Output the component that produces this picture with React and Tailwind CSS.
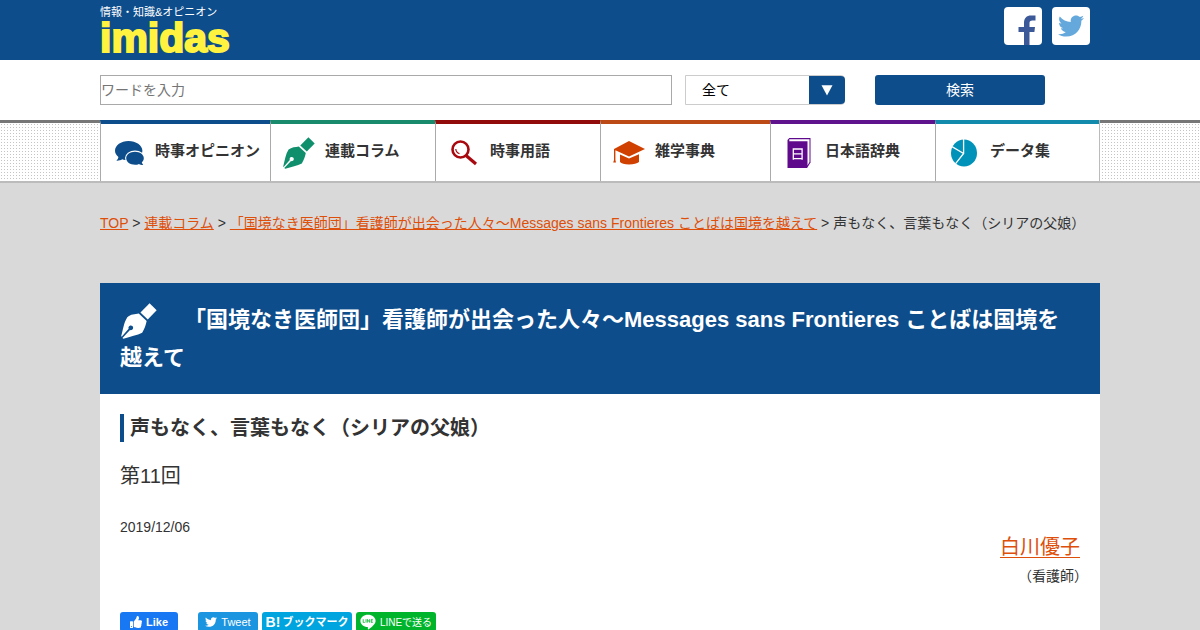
import React, { useState } from 'react';
import { FaTwitter, FaThumbsUp } from 'react-icons/fa';

const CommentsIcon = ({ className }) => (
  <svg viewBox="0 0 29 24" className={className} aria-hidden="true">
    <path d="M13.5 0 C21 0 27.4 4.4 27.4 9.8 C27.4 15 21 19.4 13.5 19.4 C11 19.4 9 19 7.2 18.3 C5.6 19.4 3.6 19.8 1.4 19.7 C2.6 18.6 3.2 17.4 3.4 16 C1.2 14.2 0 12 0 9.8 C0 4.4 6 0 13.5 0 Z" fill="currentColor" />
    <ellipse cx="20" cy="17" rx="10" ry="7.6" fill="#fff" />
    <path d="M20 10.8 C24.8 10.8 28.8 13.6 28.8 17.2 C28.8 18.8 28 20.2 26.8 21.3 C27 22.3 27.4 23 28.2 23.9 C26.4 23.9 25 23.5 24 22.9 C22.8 23.5 21.4 23.7 20 23.7 C15.2 23.7 11.2 20.9 11.2 17.2 C11.2 13.6 15.2 10.8 20 10.8 Z" fill="currentColor" />
  </svg>
);

const PenIcon = ({ className }) => (
  <svg viewBox="0 0 32 32" className={className} fill="currentColor" aria-hidden="true">
    <path d="M25.4 0.3 L31.7 6.5 L23.8 14.6 L17.3 8.5 Z" />
    <path d="M15.8 9.4 L22.8 16 C22 19.8 21 23 18.8 26.4 C14.4 28.8 8.4 29.6 2.2 31.7 L1.3 31 L8 24 A2.1 2.1 0 1 0 6.8 22.9 L0.6 30 L0.2 29.4 C2 23.2 2.4 17.6 5.6 12.6 C8.6 10 12.4 10 15.8 9.4 Z" />
  </svg>
);

const SearchIcon = ({ className }) => (
  <svg viewBox="0 0 28 26" className={className} fill="none" stroke="currentColor" aria-hidden="true">
    <circle cx="10.5" cy="9.5" r="8" strokeWidth="2.6" />
    <path d="M5.8 9 A5 5 0 0 0 9.5 13.6" strokeWidth="1.2" />
    <path d="M16 15.5 L26 24" strokeWidth="3.2" />
  </svg>
);

const CapIcon = ({ className }) => (
  <svg viewBox="0 0 32 26" className={className} fill="currentColor" aria-hidden="true">
    <path d="M16 1 L32 9 L16 16.6 L2.4 10.3 L2.4 20 L3 22.5 L0.2 22.5 L1 20 L1 9 Z" />
    <path d="M7 14.5 L16 18.6 L26 14.3 L26 22 Q23 24.4 16 24.4 Q9 24.4 7 22 Z" />
  </svg>
);

const BookIcon = ({ className }) => (
  <svg viewBox="0 0 23 30" className={className} aria-hidden="true">
    <path d="M1.8 0 H23 V24.5 L19.6 30 H0 V2 Z" fill="currentColor" />
    <path d="M1.8 1.2 H22 V24 L20 27.4 V3.2 H1.8 Z" fill="#fff" />
    <path d="M5.8 21.8 V11 H14.6 V21.8 M5.8 15.8 H14.6 M5.8 20.6 H14.6" fill="none" stroke="#fff" strokeWidth="1.3" />
  </svg>
);

const PieIcon = ({ className }) => (
  <svg viewBox="0 0 26 28" className={className} aria-hidden="true">
    <ellipse cx="13" cy="14" rx="13" ry="13.6" fill="currentColor" />
    <path d="M12.6 0 V14.5 L4.6 24.6 M12.6 14.5 L1 7.6" fill="none" stroke="#fff" strokeWidth="1.3" />
  </svg>
);

const FacebookIcon = ({ className }) => (
  <svg viewBox="0 0 18 30" className={className} fill="currentColor" aria-hidden="true">
    <path d="M6 30 V17 H0.5 V12 H6 V8 C6 3 8.6 0.5 13 0.5 H17.5 V5.5 H14.4 C12.2 5.5 11.5 6.4 11.5 8.4 V12 H17 L16.4 17 H11.5 V30 Z" />
  </svg>
);

const LineIcon = ({ className }) => (
  <svg viewBox="0 0 16 16" className={className} aria-hidden="true">
    <path d="M8 0.8 C12.2 0.8 15.6 3.5 15.6 6.9 C15.6 9.6 12 13 8.4 15.4 C7.6 15.8 8 14.2 7.8 13 C3.6 12.9 0.4 10.2 0.4 6.9 C0.4 3.5 3.8 0.8 8 0.8 Z" fill="#fff" />
    <path d="M3.2 5.2 V8.4 H4.8 M6 5.2 V8.6 M7.4 8.6 V5.4 L9.6 8.4 V5.2 M12.8 5.4 H11.2 V8.4 H12.8 M11.2 6.9 H12.6" fill="none" stroke="currentColor" strokeWidth="0.8" />
  </svg>
);

const navItems = [
  { label: '時事オピニオン', Icon: CommentsIcon, width: 'flex-[170]', border: 'border-t-[#0d4d8b]', color: 'text-[#0d4d8b]', size: 'w-[29px] h-6' },
  { label: '連載コラム', Icon: PenIcon, width: 'flex-[165]', border: 'border-t-[#1a8a6c]', color: 'text-[#0f8f6c]', size: 'w-8 h-8' },
  { label: '時事用語', Icon: SearchIcon, width: 'flex-[165]', border: 'border-t-[#920b0b]', color: 'text-[#a8090f]', size: 'w-7 h-7' },
  { label: '雑学事典', Icon: CapIcon, width: 'flex-[170]', border: 'border-t-[#bb4a17]', color: 'text-[#d04000]', size: 'w-8 h-7' },
  { label: '日本語辞典', Icon: BookIcon, width: 'flex-[165]', border: 'border-t-[#5f138c]', color: 'text-[#5f0a8c]', size: 'w-6 h-[30px]' },
  { label: 'データ集', Icon: PieIcon, width: 'flex-[164]', border: 'border-t-[#128aac]', color: 'text-[#0092b8]', size: 'w-7 h-7' },
];

const Header = () => (
  <header className="bg-[#0d4d8b]">
    <div className="max-w-[1000px] mx-auto h-[60px] flex justify-between items-start">
      <a href="#" className="block pt-1">
        <span className="block text-[11px] leading-4 text-white">情報・知識&amp;オピニオン</span>
        <span className="block text-[41px] leading-9 font-bold text-[#fff33f] [-webkit-text-stroke:2px_#fff33f]">imidas</span>
      </a>
      <div className="flex gap-2.5 pt-[7px] pr-2.5">
        <a href="#" aria-label="Facebook" className="w-[38px] h-[38px] rounded bg-white flex items-end justify-end pr-1.5 overflow-hidden">
          <FacebookIcon className="w-[18px] h-[30px] text-[#3b5998]" />
        </a>
        <a href="#" aria-label="Twitter" className="w-[38px] h-[38px] rounded bg-white flex items-center justify-center">
          <FaTwitter className="w-[26px] h-[26px] text-[#64a8dc]" />
        </a>
      </div>
    </div>
  </header>
);

const SearchBar = () => {
  const [word, setWord] = useState('');
  const [category, setCategory] = useState('all');

  return (
    <form className="bg-white" onSubmit={(e) => e.preventDefault()}>
      <div className="max-w-[1000px] mx-auto h-[60px] flex items-center">
        <input
          type="text"
          aria-label="ワードを入力"
          placeholder="ワードを入力"
          value={word}
          onChange={(e) => setWord(e.target.value)}
          className="flex-1 min-w-0 h-[30px] border border-[#a9a9a9] text-sm placeholder:text-[#757575]"
        />
        <div className="relative w-40 h-[30px] ml-[13px]">
          <select
            aria-label="カテゴリ"
            value={category}
            onChange={(e) => setCategory(e.target.value)}
            className="w-full h-full appearance-none border border-[#ccc] rounded-r bg-white pl-4 text-sm leading-5 text-black"
          >
            <option value="all">全て</option>
            {navItems.map(({ label }) => (
              <option key={label} value={label}>{label}</option>
            ))}
          </select>
          <span className="absolute right-0 inset-y-px w-9 rounded-r bg-[#0d4d8b] flex items-center justify-center pointer-events-none">
            <svg viewBox="0 0 12 11" className="w-3 h-3" fill="#fff" aria-hidden="true">
              <path d="M0.5 0.8 H11.5 L6 11 Z" />
            </svg>
          </span>
        </div>
        <button type="submit" className="w-[170px] h-[30px] ml-[30px] mr-[55px] rounded-[3px] bg-[#0d4d8b] text-sm text-white">
          検索
        </button>
      </div>
    </form>
  );
};

const Nav = () => (
  <nav className="border-t-[3px] border-t-[#777] border-b-2 border-b-[#bbb] bg-white bg-[radial-gradient(#c4c4c4_1px,transparent_1px)] bg-[length:3px_3px]">
    <ul className="max-w-[1000px] mx-auto -mt-[3px] flex bg-white border-r border-[#bbb]">
      {navItems.map(({ label, Icon, width, border, color, size }) => (
        <li key={label} className={`${width} border-l border-l-[#aaa] border-t-4 ${border}`}>
          <a href="#" className="flex items-center h-[57px] pl-3 gap-2.5">
            <span className={`w-8 flex justify-center ${color}`}>
              <Icon className={size} />
            </span>
            <span className="pb-1 text-[15px] leading-5 font-bold whitespace-nowrap text-[#333]">{label}</span>
          </a>
        </li>
      ))}
    </ul>
  </nav>
);

const link = 'text-[#dd4f0a] underline';

const Breadcrumb = () => (
  <div className="max-w-[1000px] mx-auto pt-[30px] pb-[50px] text-sm leading-5">
    <a href="#" className={link}>TOP</a>
    {' > '}
    <a href="#" className={link}>連載コラム</a>
    {' > '}
    <a href="#" className={link}>「国境なき医師団」看護師が出会った人々～Messages sans Frontieres ことばは国境を越えて</a>
    {' > '}声もなく、言葉もなく（シリアの父娘）
  </div>
);

const ShareButtons = () => (
  <div className="flex items-center pt-[26px] text-[11px] text-white">
    <button className="w-[58px] h-5 mr-5 rounded-[3px] bg-[#1877f2] flex items-center justify-center gap-1 font-bold">
      <FaThumbsUp className="w-3 h-3" />
      Like
    </button>
    <div className="flex gap-1">
      <a href="#" className="w-[60px] h-5 rounded-[3px] bg-[#1b95e0] flex items-center justify-center gap-1">
        <FaTwitter className="w-3 h-3" />
        Tweet
      </a>
      <a href="#" className="w-[90px] h-5 rounded-[3px] bg-[#00a4de] flex items-center justify-center gap-0.5 font-bold whitespace-nowrap">
        <span className="text-sm">B!</span>
        ブックマーク
      </a>
      <a href="#" className="w-20 h-5 rounded-[3px] bg-[#00b52c] flex items-center justify-center gap-1 text-[10px] whitespace-nowrap">
        <LineIcon className="w-4 h-4 text-[#00b52c]" />
        LINEで送る
      </a>
    </div>
  </div>
);

const Article = () => (
  <article className="max-w-[1000px] mx-auto bg-white">
    <h1 className="bg-[#0d4d8b] px-5 pt-[18px] pb-[18px] text-[22px] leading-[37px] font-bold text-white">
      <PenIcon className="inline-block w-[38px] h-9 mr-[26px]" />
      「国境なき医師団」看護師が出会った人々～Messages sans Frontieres ことばは国境を越えて
    </h1>
    <div className="px-5 pt-5">
      <h2 className="border-l-4 border-[#0d4d8b] pl-1.5 text-xl leading-7 font-bold">声もなく、言葉もなく（シリアの父娘）</h2>
      <p className="pt-5 text-xl leading-7">第11回</p>
      <p className="pt-[27px] text-sm leading-5">2019/12/06</p>
      <div className="flex flex-col items-end">
        <a href="#" className="border-b border-[#dd4f0a] text-xl leading-5 text-[#dd4f0a]">白川優子</a>
        <span className="-mr-2 pt-2 text-sm leading-5">（看護師）</span>
      </div>
      <ShareButtons />
    </div>
  </article>
);

export default function App() {
  return (
    <div className="min-h-screen bg-[#d9d9d9] text-[#333] font-['Liberation_Sans','Noto_Sans_CJK_JP',sans-serif]">
      <Header />
      <SearchBar />
      <Nav />
      <Breadcrumb />
      <Article />
    </div>
  );
}
